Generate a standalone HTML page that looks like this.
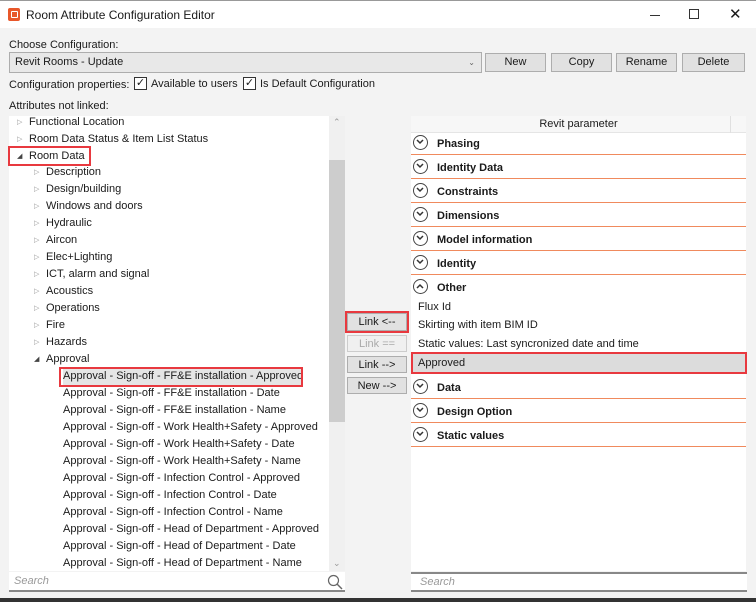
<!DOCTYPE html>
<html><head><meta charset="utf-8"><style>
*{box-sizing:border-box;margin:0;padding:0}
body{width:756px;height:602px;overflow:hidden;background:#f3f3f3;font-family:"Liberation Sans",sans-serif;font-size:11px;color:#1a1a1a;position:relative}
.abs{position:absolute}
.title{left:0;top:0;width:756px;height:28px;background:#fff;border-top:1px solid #999}
.btn{position:absolute;background:#e1e1e1;border:1px solid #adadad;text-align:center;line-height:16px;font-size:11px}
.tree{left:9px;top:116px;width:320px;height:455px;background:#fff;overflow:hidden}
.tree div{position:absolute;white-space:nowrap;height:17px;line-height:17px}
.tri{font-size:7px;color:#999;position:absolute}
.right{left:411px;top:116px;width:335px;height:455px;background:#fff}
.sec{position:absolute;left:0;width:335px;height:24px;border-bottom:1px solid #f08a5d;font-weight:bold;font-size:11px;line-height:26px}
.sec .c{position:absolute;left:2px;top:4px;width:15px;height:15px;border:1.5px solid #444;border-radius:50%}
.sec .c svg{position:absolute;left:2px;top:3px}
.sec span{position:absolute;left:26px}
.item{position:absolute;left:7px;height:18px;line-height:18px}
.red{position:absolute;border:2px solid #e8393f}
</style></head><body>
<div class="abs title">
 <div class="abs" style="left:8px;top:7px;width:12px;height:13px;background:#e8572a;border-radius:2px"><div class="abs" style="left:3px;top:3px;width:7px;height:7px;border:1.5px solid #fff;border-radius:1px"></div></div>
 <div class="abs" style="left:26px;top:7px;font-size:12px">Room Attribute Configuration Editor</div>
 <div class="abs" style="left:650px;top:14px;width:10px;height:1px;background:#333"></div>
 <div class="abs" style="left:689px;top:8px;width:10px;height:10px;border:1px solid #333"></div>
 <div class="abs" style="left:729px;top:4px;font-size:15px">✕</div>
</div>
<div class="abs" style="left:9px;top:39px">Choose Configuration:</div>
<div class="abs" style="left:9px;top:52px;width:473px;height:21px;background:#e8e8e8;border:1px solid #adadad;line-height:19px;padding-left:5px">Revit Rooms - Update<span class="abs" style="right:6px;top:0;font-size:8px;color:#666">⌄</span></div>
<div class="btn" style="left:485px;top:53px;width:61px;height:19px;line-height:17px">New</div>
<div class="btn" style="left:551px;top:53px;width:61px;height:19px;line-height:17px">Copy</div>
<div class="btn" style="left:616px;top:53px;width:61px;height:19px;line-height:17px">Rename</div>
<div class="btn" style="left:682px;top:53px;width:63px;height:19px;line-height:17px">Delete</div>
<div class="abs" style="left:9px;top:79px">Configuration properties:</div>
<div class="abs" style="left:134px;top:77px;width:13px;height:13px;border:1px solid #333;background:#fff;font-size:11px;line-height:11px;text-align:center">✓</div>
<div class="abs" style="left:151px;top:78px">Available to users</div>
<div class="abs" style="left:243px;top:77px;width:13px;height:13px;border:1px solid #333;background:#fff;font-size:11px;line-height:11px;text-align:center">✓</div>
<div class="abs" style="left:260px;top:78px">Is Default Configuration</div>
<div class="abs" style="left:9px;top:100px">Attributes not linked:</div>

<div class="abs tree">
<div style="left:8px;top:-2px"><span class="tri" style="left:0">▷</span><span style="position:absolute;left:12px">Functional Location</span></div>
<div style="left:8px;top:15px"><span class="tri" style="left:0">▷</span><span style="position:absolute;left:12px">Room Data Status &amp; Item List Status</span></div>
<div style="left:8px;top:32px"><span class="tri" style="left:0;color:#444">◢</span><span style="position:absolute;left:12px">Room Data</span></div>
<div style="left:25px;top:48px"><span class="tri">▷</span><span style="position:absolute;left:12px">Description</span></div>
<div style="left:25px;top:65px"><span class="tri">▷</span><span style="position:absolute;left:12px">Design/building</span></div>
<div style="left:25px;top:82px"><span class="tri">▷</span><span style="position:absolute;left:12px">Windows and doors</span></div>
<div style="left:25px;top:99px"><span class="tri">▷</span><span style="position:absolute;left:12px">Hydraulic</span></div>
<div style="left:25px;top:116px"><span class="tri">▷</span><span style="position:absolute;left:12px">Aircon</span></div>
<div style="left:25px;top:133px"><span class="tri">▷</span><span style="position:absolute;left:12px">Elec+Lighting</span></div>
<div style="left:25px;top:150px"><span class="tri">▷</span><span style="position:absolute;left:12px">ICT, alarm and signal</span></div>
<div style="left:25px;top:167px"><span class="tri">▷</span><span style="position:absolute;left:12px">Acoustics</span></div>
<div style="left:25px;top:184px"><span class="tri">▷</span><span style="position:absolute;left:12px">Operations</span></div>
<div style="left:25px;top:201px"><span class="tri">▷</span><span style="position:absolute;left:12px">Fire</span></div>
<div style="left:25px;top:218px"><span class="tri">▷</span><span style="position:absolute;left:12px">Hazards</span></div>
<div style="left:25px;top:235px"><span class="tri" style="color:#444">◢</span><span style="position:absolute;left:12px">Approval</span></div>
<div style="left:54px;top:252px;background:#e5e5e5;width:240px">Approval - Sign-off - FF&amp;E installation - Approved</div>
<div style="left:54px;top:269px">Approval - Sign-off - FF&amp;E installation - Date</div>
<div style="left:54px;top:286px">Approval - Sign-off - FF&amp;E installation - Name</div>
<div style="left:54px;top:303px">Approval - Sign-off - Work Health+Safety - Approved</div>
<div style="left:54px;top:320px">Approval - Sign-off - Work Health+Safety - Date</div>
<div style="left:54px;top:337px">Approval - Sign-off - Work Health+Safety - Name</div>
<div style="left:54px;top:354px">Approval - Sign-off - Infection Control - Approved</div>
<div style="left:54px;top:371px">Approval - Sign-off - Infection Control - Date</div>
<div style="left:54px;top:388px">Approval - Sign-off - Infection Control - Name</div>
<div style="left:54px;top:405px">Approval - Sign-off - Head of Department - Approved</div>
<div style="left:54px;top:422px">Approval - Sign-off - Head of Department - Date</div>
<div style="left:54px;top:439px">Approval - Sign-off - Head of Department - Name</div>
</div>
<div class="red" style="left:8px;top:146px;width:83px;height:20px"></div>
<div class="red" style="left:59px;top:367px;width:244px;height:20px"></div>
<div class="abs" style="left:329px;top:116px;width:16px;height:455px;background:#f0f0f0"></div>
<div class="abs" style="left:329px;top:160px;width:16px;height:262px;background:#cdcdcd"></div>
<div class="abs" style="left:333px;top:117px;font-size:9px;color:#999">⌃</div>
<div class="abs" style="left:333px;top:558px;font-size:9px;color:#999">⌄</div>
<div class="abs" style="left:9px;top:572px;width:336px;height:20px;background:#fff;border-bottom:2px solid #888;font-style:italic;color:#999;padding:3px 5px">Search</div>
<svg class="abs" style="left:327px;top:574px" width="16" height="16"><circle cx="6.5" cy="6.5" r="5" fill="none" stroke="#666" stroke-width="1.2"/><line x1="10" y1="10" x2="15" y2="15" stroke="#666" stroke-width="1.4"/></svg>

<div class="btn" style="left:347px;top:313px;width:60px;height:18px">Link &lt;--</div>
<div class="red" style="left:345px;top:311px;width:64px;height:22px"></div>
<div class="btn" style="left:347px;top:335px;width:60px;height:17px;color:#aaa;background:#f0f0f0;border-color:#ccc">Link ==</div>
<div class="btn" style="left:347px;top:356px;width:60px;height:17px">Link --&gt;</div>
<div class="btn" style="left:347px;top:377px;width:60px;height:17px">New --&gt;</div>

<div class="abs right">
<div class="abs" style="left:0;top:0;width:335px;height:17px;background:#f7f7f7;border-bottom:1px solid #e5e5e5;text-align:center;line-height:17px">Revit parameter</div>
<div class="abs" style="left:319px;top:0;width:1px;height:17px;background:#e0e0e0"></div>
</div>
<div class="abs" style="left:411px;top:131px;width:335px;height:300px">
 <div class="sec" style="top:0"><div class="c"><svg width="8" height="6"><path d="M1 1L4 4L7 1" fill="none" stroke="#333" stroke-width="1.5"/></svg></div><span>Phasing</span></div>
 <div class="sec" style="top:24px"><div class="c"><svg width="8" height="6"><path d="M1 1L4 4L7 1" fill="none" stroke="#333" stroke-width="1.5"/></svg></div><span>Identity Data</span></div>
 <div class="sec" style="top:48px"><div class="c"><svg width="8" height="6"><path d="M1 1L4 4L7 1" fill="none" stroke="#333" stroke-width="1.5"/></svg></div><span>Constraints</span></div>
 <div class="sec" style="top:72px"><div class="c"><svg width="8" height="6"><path d="M1 1L4 4L7 1" fill="none" stroke="#333" stroke-width="1.5"/></svg></div><span>Dimensions</span></div>
 <div class="sec" style="top:96px"><div class="c"><svg width="8" height="6"><path d="M1 1L4 4L7 1" fill="none" stroke="#333" stroke-width="1.5"/></svg></div><span>Model information</span></div>
 <div class="sec" style="top:120px"><div class="c"><svg width="8" height="6"><path d="M1 1L4 4L7 1" fill="none" stroke="#333" stroke-width="1.5"/></svg></div><span>Identity</span></div>
 <div class="sec" style="top:144px;border-bottom:none"><div class="c"><svg width="8" height="6"><path d="M1 5L4 2L7 5" fill="none" stroke="#333" stroke-width="1.5"/></svg></div><span>Other</span></div>
 <div class="item" style="top:167px">Flux Id</div>
 <div class="item" style="top:185px">Skirting with item BIM ID</div>
 <div class="item" style="top:204px">Static values: Last syncronized date and time</div>
 <div class="abs" style="left:0;top:222px;width:335px;height:20px;background:#dcdcdc"></div>
 <div class="item" style="top:223px">Approved</div>
 <div class="sec" style="top:244px"><div class="c"><svg width="8" height="6"><path d="M1 1L4 4L7 1" fill="none" stroke="#333" stroke-width="1.5"/></svg></div><span>Data</span></div>
 <div class="sec" style="top:268px"><div class="c"><svg width="8" height="6"><path d="M1 1L4 4L7 1" fill="none" stroke="#333" stroke-width="1.5"/></svg></div><span>Design Option</span></div>
 <div class="sec" style="top:292px"><div class="c"><svg width="8" height="6"><path d="M1 1L4 4L7 1" fill="none" stroke="#333" stroke-width="1.5"/></svg></div><span>Static values</span></div>
</div>
<div class="red" style="left:411px;top:352px;width:336px;height:22px"></div>
<div class="abs" style="left:411px;top:572px;width:336px;height:20px;background:#fff;border-top:2px solid #888;border-bottom:2px solid #888;font-style:italic;color:#999;padding:2px 9px">Search</div>
<div class="abs" style="left:0;top:598px;width:756px;height:4px;background:#333"></div>
</body></html>
